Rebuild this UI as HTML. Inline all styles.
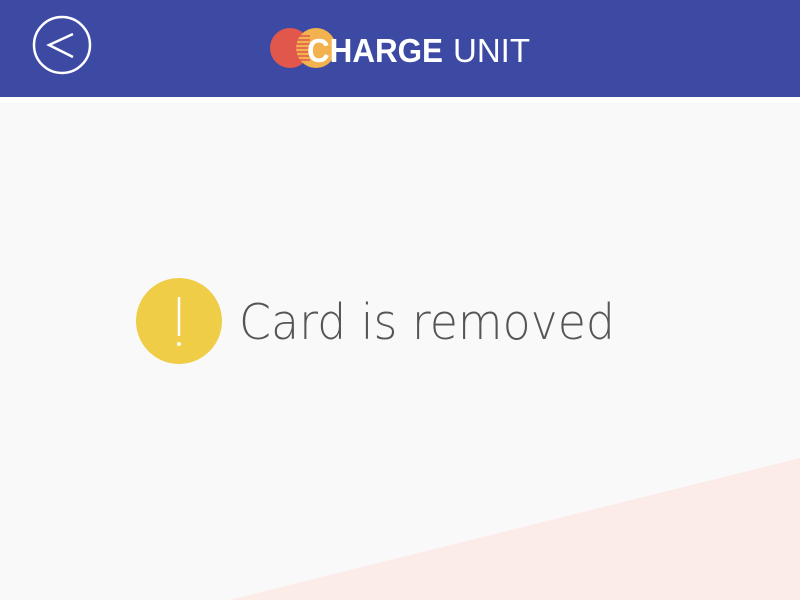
<!DOCTYPE html>
<html><head><style>
body{margin:0;width:800px;height:600px;overflow:hidden;background:#f9f9f9;font-family:"Liberation Sans",sans-serif;position:relative}
.hdr{position:absolute;left:0;top:0;width:800px;height:97px;background:#3d4aa3}
.strip{position:absolute;left:0;top:97px;width:800px;height:6px;background:#fff}
</style></head><body>
<div class="hdr"></div><div class="strip"></div>
<svg width="800" height="600" style="position:absolute;left:0;top:0">
<polygon points="230,600 800,458 800,600" fill="#fbece8"/>
<circle cx="62" cy="45" r="28" fill="none" stroke="#fff" stroke-width="2.5"/>
<polyline points="73,34 49,45 73,57" fill="none" stroke="#fff" stroke-width="2.5"/>
<circle cx="290" cy="48" r="20" fill="#e1574b"/>
<circle cx="316" cy="48" r="20" fill="#f2b24f"/>
<g stroke="#e1574b" stroke-width="1.5">
<line x1="296" y1="36" x2="310" y2="36"/><line x1="296" y1="40" x2="310" y2="40"/><line x1="296" y1="44" x2="310" y2="44"/><line x1="296" y1="48" x2="310" y2="48"/><line x1="296" y1="52" x2="310" y2="52"/><line x1="296" y1="56" x2="310" y2="56"/><line x1="296" y1="60" x2="310" y2="60"/>
</g>
<text x="307" y="62" font-family="Liberation Sans" font-weight="bold" font-size="33" fill="#fff" textLength="136" lengthAdjust="spacingAndGlyphs">CHARGE</text>
<text x="453" y="62" font-family="Liberation Sans" font-size="33" fill="#fff" textLength="77" lengthAdjust="spacingAndGlyphs">UNIT</text>
<circle cx="179" cy="321" r="43" fill="#efcd46"/>
<line x1="179" y1="297" x2="179" y2="336" stroke="#fff" stroke-width="2.5"/>
<circle cx="179" cy="344" r="2" fill="#fff"/>
<text x="239" y="339" font-family="DejaVu Sans" font-weight="200" font-size="49" fill="#555" textLength="376" lengthAdjust="spacingAndGlyphs">Card is removed</text>
</svg>
</body></html>
